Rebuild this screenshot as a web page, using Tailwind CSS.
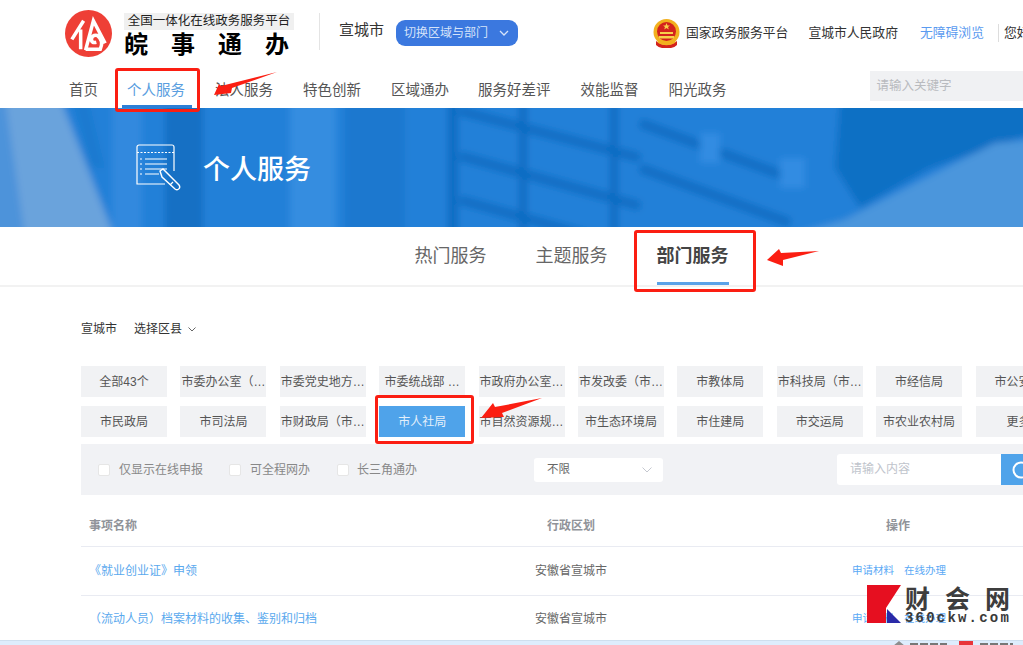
<!DOCTYPE html>
<html lang="zh"><head><meta charset="utf-8">
<script src="https://cdn.jsdelivr.net/npm/@tailwindcss/browser@4"></script>
</head>
<body class="m-0 bg-white">
<div class="relative w-[1023px] h-[645px] overflow-hidden bg-white text-[#333] font-['Liberation_Sans','Noto_Sans_CJK_SC',sans-serif]">
  <!-- header -->
  <header class="h-[108px] flex flex-col">
    <div class="h-[68px] flex items-start pl-[65px] whitespace-nowrap">
      <svg class="w-[47px] h-[47px] mt-[10px] shrink-0" viewBox="0 0 48 48"><circle cx="24" cy="24" r="24" fill="#ee3f36"/><path d="M7 30L19 11M16 20V40M21 41L29 11L41 34M21 40H36Q40 31 33 26Q27 25 27 31Q28 34 32 33" fill="none" stroke="#fff" stroke-width="3.600"/></svg>
      <div class="ml-[12px] w-[170px] mt-[13px] shrink-0">
        <div class="w-[170px] h-[17px] bg-[#f0f0f0] text-[12.500px] leading-[17px] text-center text-[#222]">全国一体化在线政务服务平台</div>
        <div class="flex justify-between w-[165px] text-[24px] leading-[26px] font-['Noto_Sans_CJK_SC',serif] font-bold text-black"><span>皖</span><span>事</span><span>通</span><span>办</span></div>
      </div>
      <div class="w-px h-[37px] bg-[#e4e4e4] ml-[25px] mt-[13px] shrink-0"></div>
      <div class="ml-[19px] mt-[20px] text-[15px] leading-[20px] w-[45px] shrink-0 text-[#333]">宣城市</div>
      <div class="ml-[12px] mt-[20px] w-[122px] h-[26px] rounded-[9px] bg-[#3b78df] text-[#d5e3fa] text-[12px] leading-[26px] pl-[8px] flex items-center shrink-0">
        <span>切换区域与部门</span>
        <svg class="w-[10px] h-[6px] ml-[11px]" viewBox="0 0 10 6"><path d="M1 1l4 4 4-4" fill="none" stroke="#d5e3fa" stroke-width="1.300"/></svg>
      </div>
      <svg class="w-[27px] h-[30px] ml-[135px] mt-[19px] shrink-0" viewBox="0 0 27 30">
        <circle cx="13.500" cy="13" r="13" fill="#f2b01e"/><circle cx="13.500" cy="12.500" r="9.500" fill="#d3231c"/>
        <path d="M13.500 4l1 2.500h2.500l-2 1.600.8 2.500-2.300-1.500-2.300 1.500.8-2.500-2-1.600H12.500z" fill="#f7d04a"/>
        <rect x="7" y="13" width="13" height="2" fill="#f7d04a"/><rect x="6" y="17" width="15" height="2.500" fill="#f7d04a"/>
        <path d="M3 22q10.500 8 21 0v4q-3 3-6 3H9q-3 0-6-3z" fill="#d3231c"/><path d="M5 23q8.500 5 17 0" stroke="#f2b01e" stroke-width="1.600" fill="none"/>
      </svg>
      <span class="ml-[6px] mt-[24px] text-[12.800px] leading-[18px] text-[#333] shrink-0">国家政务服务平台</span>
      <span class="ml-[20px] mt-[24px] text-[12.800px] leading-[18px] text-[#333] shrink-0">宣城市人民政府</span>
      <span class="ml-[22px] mt-[24px] text-[12.800px] leading-[18px] text-[#5b9bf0] shrink-0">无障碍浏览</span>
      <div class="w-px h-[18px] bg-[#ddd] ml-[14px] mt-[24px] shrink-0"></div>
      <span class="ml-[5px] mt-[24px] text-[12.800px] leading-[18px] text-[#333] shrink-0">您好</span>
    </div>
    <nav class="relative flex-1 flex items-start pl-[69px] text-[14.500px] leading-[20px] text-[#555] whitespace-nowrap">
      <a class="mt-[12px]">首页</a>
      <a class="relative ml-[29px] mt-[12px] text-[#5a9ee0]">个人服务<span class="absolute left-[-5px] right-[-7px] top-[25px] h-[3px] bg-[#2d7fd6]"></span></a>
      <a class="ml-[30px] mt-[12px]">法人服务</a>
      <a class="ml-[30px] mt-[12px]">特色创新</a>
      <a class="ml-[30px] mt-[12px]">区域通办</a>
      <a class="ml-[29px] mt-[12px]">服务好差评</a>
      <a class="ml-[30px] mt-[12px]">效能监督</a>
      <a class="ml-[30px] mt-[12px]">阳光政务</a>
      <div class="ml-[143px] mt-[3px] w-[153px] h-[30px] bg-[#f0f1f3] text-[12.500px] leading-[31px] text-[#b9bbbf] pl-[7px]">请输入关键字</div>
    </nav>
  </header>

  <!-- banner -->
  <section class="relative h-[119px] flex items-center pl-[136px] overflow-hidden bg-[#2280d8]">
    <svg class="absolute left-0 top-0 w-[1023px] h-[119px]" viewBox="0 0 1023 119" preserveAspectRatio="none">
      <defs><filter id="b" x="-5%" y="-20%" width="110%" height="140%"><feGaussianBlur stdDeviation="3.500"/></filter></defs>
      <g filter="url(#b)">
        <rect x="-20" y="-20" width="1070" height="160" fill="#2280d8"/>
        <rect x="-20" y="-20" width="60" height="160" fill="#4d93da"/>
        <path d="M5 -10L60 -10L115 130L25 130z" fill="#6aa3dc"/>
        <path d="M72 -10L88 -10L105 60L90 60z" fill="#1c7ad0"/>
        <rect x="112" y="-10" width="30" height="140" fill="#3189de"/>
        <rect x="165" y="-10" width="38" height="140" fill="#1270c4"/>
        <rect x="290" y="-10" width="46" height="140" fill="#358de0"/>
        <rect x="345" y="-10" width="60" height="140" fill="#1a78cf"/>
        <rect x="448" y="-10" width="10" height="140" fill="#0f6cc2"/>
        <rect x="519" y="-10" width="8" height="140" fill="#0f6cc2"/>
        <rect x="610" y="-10" width="8" height="140" fill="#0f6cc2"/>
        <g stroke="#0f6cc2" stroke-width="9" fill="none">
          <path d="M460 3L640 50M460 48L640 98M460 92L640 142"/>
          <path d="M640 15L790 70M640 60L790 115"/>
        </g>
        <rect x="700" y="25" width="20" height="30" fill="#318ce2"/>
        <rect x="780" y="50" width="25" height="30" fill="#318ce2"/>
        <path d="M840 -10H1050V20L930 60L860 100L835 60z" fill="#1070c4"/>
        <path d="M780 130L844 112L995 35L1030 32V130z" fill="#4c96dc"/>
      </g>
    </svg>
    <svg class="relative w-[47px] h-[47px] shrink-0" viewBox="0 0 47 47" fill="none" stroke="#fff">
      <path d="M38 27V3a2 2 0 0 0-2-2H3a2 2 0 0 0-2 2v37h28" stroke-width="1.200"/>
      <path d="M1 8.500h37" stroke-width="1.200" stroke-dasharray="2 1.500"/>
      <path d="M9 15h22M9 20h22M9 25h22M9 30h14" stroke-width="1.200"/>
      <path d="M4 15h2M4 20h2M4 25h2M4 30h2" stroke-width="1.200"/>
      <path d="M24 27l3-2 16 16c2 3-1 6-4 4L26 33z" stroke-width="1.400"/><path d="M37 38l-3 3" stroke-width="1.200"/>
    </svg>
    <h1 class="relative ml-[20px] text-[27px] leading-[32px] text-white font-medium font-['Noto_Sans_CJK_SC',serif]">个人服务</h1>
  </section>

  <!-- tabs -->
  <div class="h-[60px] border-b-2 border-[#f2f2f2] flex justify-center pl-[120px] gap-[49px] text-[18px] leading-[28px] text-[#666] whitespace-nowrap">
    <a class="mt-[15px]">热门服务</a>
    <a class="mt-[15px]">主题服务</a>
    <a class="relative mt-[15px] font-bold text-[#444]">部门服务<span class="absolute left-0 right-0 top-[40px] h-[3px] bg-[#5aa2e8]"></span></a>
  </div>

  <!-- main -->
  <main class="pl-[81px] w-[1100px]">
    <div class="h-[79px] flex items-start pt-[32px] text-[12px] leading-[20px] text-[#333]">
      <span>宣城市</span><span class="ml-[17px]">选择区县</span>
      <svg class="w-[8px] h-[5px] ml-[6px] mt-[8px]" viewBox="0 0 8 5"><path d="M.5.5l3.500 3.500L7.500.5" fill="none" stroke="#666"/></svg>
    </div>
    <div class="grid grid-cols-[repeat(10,86px)] gap-x-[13.400px] gap-y-[9px] text-[12px] leading-[32px] text-[#555] text-center whitespace-nowrap">
      <div class="h-[31px] bg-[#f1f2f4]">全部43个</div>
      <div class="h-[31px] bg-[#f1f2f4]">市委办公室（…</div>
      <div class="h-[31px] bg-[#f1f2f4]">市委党史地方…</div>
      <div class="h-[31px] bg-[#f1f2f4]">市委统战部 …</div>
      <div class="h-[31px] bg-[#f1f2f4] overflow-hidden">市政府办公室…</div>
      <div class="h-[31px] bg-[#f1f2f4]">市发改委（市…</div>
      <div class="h-[31px] bg-[#f1f2f4]">市教体局</div>
      <div class="h-[31px] bg-[#f1f2f4]">市科技局（市…</div>
      <div class="h-[31px] bg-[#f1f2f4]">市经信局</div>
      <div class="h-[31px] bg-[#f1f2f4]">市公安局</div>
      <div class="h-[31px] bg-[#f1f2f4]">市民政局</div>
      <div class="h-[31px] bg-[#f1f2f4]">市司法局</div>
      <div class="h-[31px] bg-[#f1f2f4]">市财政局（市…</div>
      <div class="h-[31px] bg-[#4fa3ea] text-[#e4f0fb]">市人社局</div>
      <div class="h-[31px] bg-[#f1f2f4] overflow-hidden">市自然资源规…</div>
      <div class="h-[31px] bg-[#f1f2f4]">市生态环境局</div>
      <div class="h-[31px] bg-[#f1f2f4]">市住建局</div>
      <div class="h-[31px] bg-[#f1f2f4]">市交运局</div>
      <div class="h-[31px] bg-[#f1f2f4]">市农业农村局</div>
      <div class="h-[31px] bg-[#f1f2f4]">更多</div>
    </div>
    <!-- filters -->
    <div class="mt-[7px] h-[51px] w-[962px] bg-[#f1f2f5] flex items-center text-[12px] text-[#888] whitespace-nowrap">
      <span class="ml-[17px] w-[12px] h-[12px] rounded-[2px] bg-white border border-[#e6e6e6]"></span><span class="ml-[9px]">仅显示在线申报</span>
      <span class="ml-[26px] w-[12px] h-[12px] rounded-[2px] bg-white border border-[#e6e6e6]"></span><span class="ml-[9px]">可全程网办</span>
      <span class="ml-[27px] w-[12px] h-[12px] rounded-[2px] bg-white border border-[#e6e6e6]"></span><span class="ml-[8px]">长三角通办</span>
      <div class="ml-[117px] w-[129px] h-[24px] rounded-[3px] bg-white flex items-center justify-between pl-[13px] pr-[11px] text-[11.500px] text-[#666]">
        <span>不限</span><svg class="w-[10px] h-[6px]" viewBox="0 0 10 6"><path d="M.5.5l4.500 4.500L9.500.5" fill="none" stroke="#c5c8d0"/></svg>
      </div>
      <div class="ml-[174px] w-[164px] h-[31px] rounded-l-[3px] bg-white pl-[13px] leading-[31px] text-[#c0c4cc]">请输入内容</div>
      <div class="w-[40px] h-[31px] bg-[#4fa3ea] flex items-center pl-[10px]">
        <svg class="w-[20px] h-[20px]" viewBox="0 0 20 20"><circle cx="10" cy="10" r="7.500" fill="none" stroke="#fff" stroke-width="2"/></svg>
      </div>
    </div>
    <!-- table -->
    <div class="w-[942px] text-[12px]">
      <div class="h-[52px] pt-[10px] flex items-center border-b border-[#e9ebf2] font-bold text-[#909399]">
        <span class="ml-[8px] w-[458px]">事项名称</span><span class="w-[339px]">行政区划</span><span>操作</span>
      </div>
      <div class="h-[49px] flex items-center border-b border-[#e9ebf2]">
        <a class="pl-[8px] w-[454px] text-[#5aa9ee]">《就业创业证》申领</a><span class="w-[317px] text-[#666]">安徽省宣城市</span><a class="text-[#5aa9f5] text-[10.500px]">申请材料</a><a class="ml-[10px] text-[#5aa9f5] text-[10.500px]">在线办理</a>
      </div>
      <div class="h-[45px] flex items-center">
        <a class="pl-[8px] w-[454px] text-[#5aa9ee]">（流动人员）档案材料的收集、鉴别和归档</a><span class="w-[317px] text-[#666]">安徽省宣城市</span><a class="text-[#5aa9f5] text-[10.500px]">申请材料</a><a class="ml-[10px] text-[#5aa9f5] text-[10.500px]">在线办理</a>
      </div>
    </div>
  </main>

  <!-- bottom browser strip -->
  <div class="absolute left-0 right-0 bottom-0 h-[5px] bg-[#deedfd] border-t border-[#cfdfef]">
    <div class="absolute left-[893px] top-[0px] w-0 h-0 border-x-[6px] border-x-transparent border-b-[5px] border-b-[#8d8d8d]"></div>
    <div class="absolute left-[910px] top-[2px] w-[37px] h-[2px] bg-[repeating-linear-gradient(90deg,#777_0px,#777_8px,#deedfd_8px,#deedfd_10px)]"></div>
    <div class="absolute left-[959px] top-0 w-[14px] h-[5px] bg-[#e8353a]"></div>
    <div class="absolute left-[980px] top-[2px] w-[33px] h-[2px] bg-[repeating-linear-gradient(90deg,#777_0px,#777_8px,#deedfd_8px,#deedfd_10px)]"></div>
  </div>

  <!-- annotations -->
  <div class="absolute left-[115px] top-[68px] w-[85px] h-[44px] border-[3px] border-[#fb1e12] rounded-[3px]"></div>
  <div class="absolute left-[634px] top-[230px] w-[122px] h-[62px] border-[3px] border-[#fb1e12] rounded-[3px]"></div>
  <div class="absolute left-[375px] top-[395px] w-[99px] h-[49px] border-[3px] border-[#fb1e12] rounded-[3px]"></div>
  <svg class="absolute left-[210px] top-[68px] w-[70px] h-[30px]" viewBox="0 0 70 30"><path d="M4 27L9 16l2 2L67 4 22 20l-1 5z" fill="#fb1e12"/></svg>
  <svg class="absolute left-[765px] top-[245px] w-[56px] h-[24px]" viewBox="0 0 56 24"><path d="M2 15L14 4l2 4L54 6 18 15l0 6z" fill="#fb1e12"/></svg>
  <svg class="absolute left-[480px] top-[394px] w-[64px] h-[30px]" viewBox="0 0 64 30"><path d="M1 24L13 9l2 4L62 4 22 19l2 4z" fill="#fb1e12"/></svg>

  <!-- watermark -->
  <div class="absolute left-[867px] top-[585px] w-[150px] h-[40px]">
    <svg class="absolute left-0 top-0 w-[35px] h-[38px]" viewBox="0 0 35 38"><path d="M0 0H34L19 23V38H0z" fill="#e60f20"/><path d="M20 24L34 38H20z" fill="#2a2aa8"/></svg>
    <div class="absolute left-[38px] top-[-3px] w-[105px] flex justify-between text-[25px] leading-[30px] font-bold text-[#3d3d3d] font-['Noto_Sans_CJK_SC',sans-serif]"><span>财</span><span>会</span><span>网</span></div>
    <div class="absolute left-[38px] top-[26px] text-[14px] leading-[14px] tracking-[2.200px] font-bold text-[#3a3a3a] font-['Liberation_Mono',monospace] whitespace-nowrap">360ckw.com</div>
  </div>
</div>
</body></html>
